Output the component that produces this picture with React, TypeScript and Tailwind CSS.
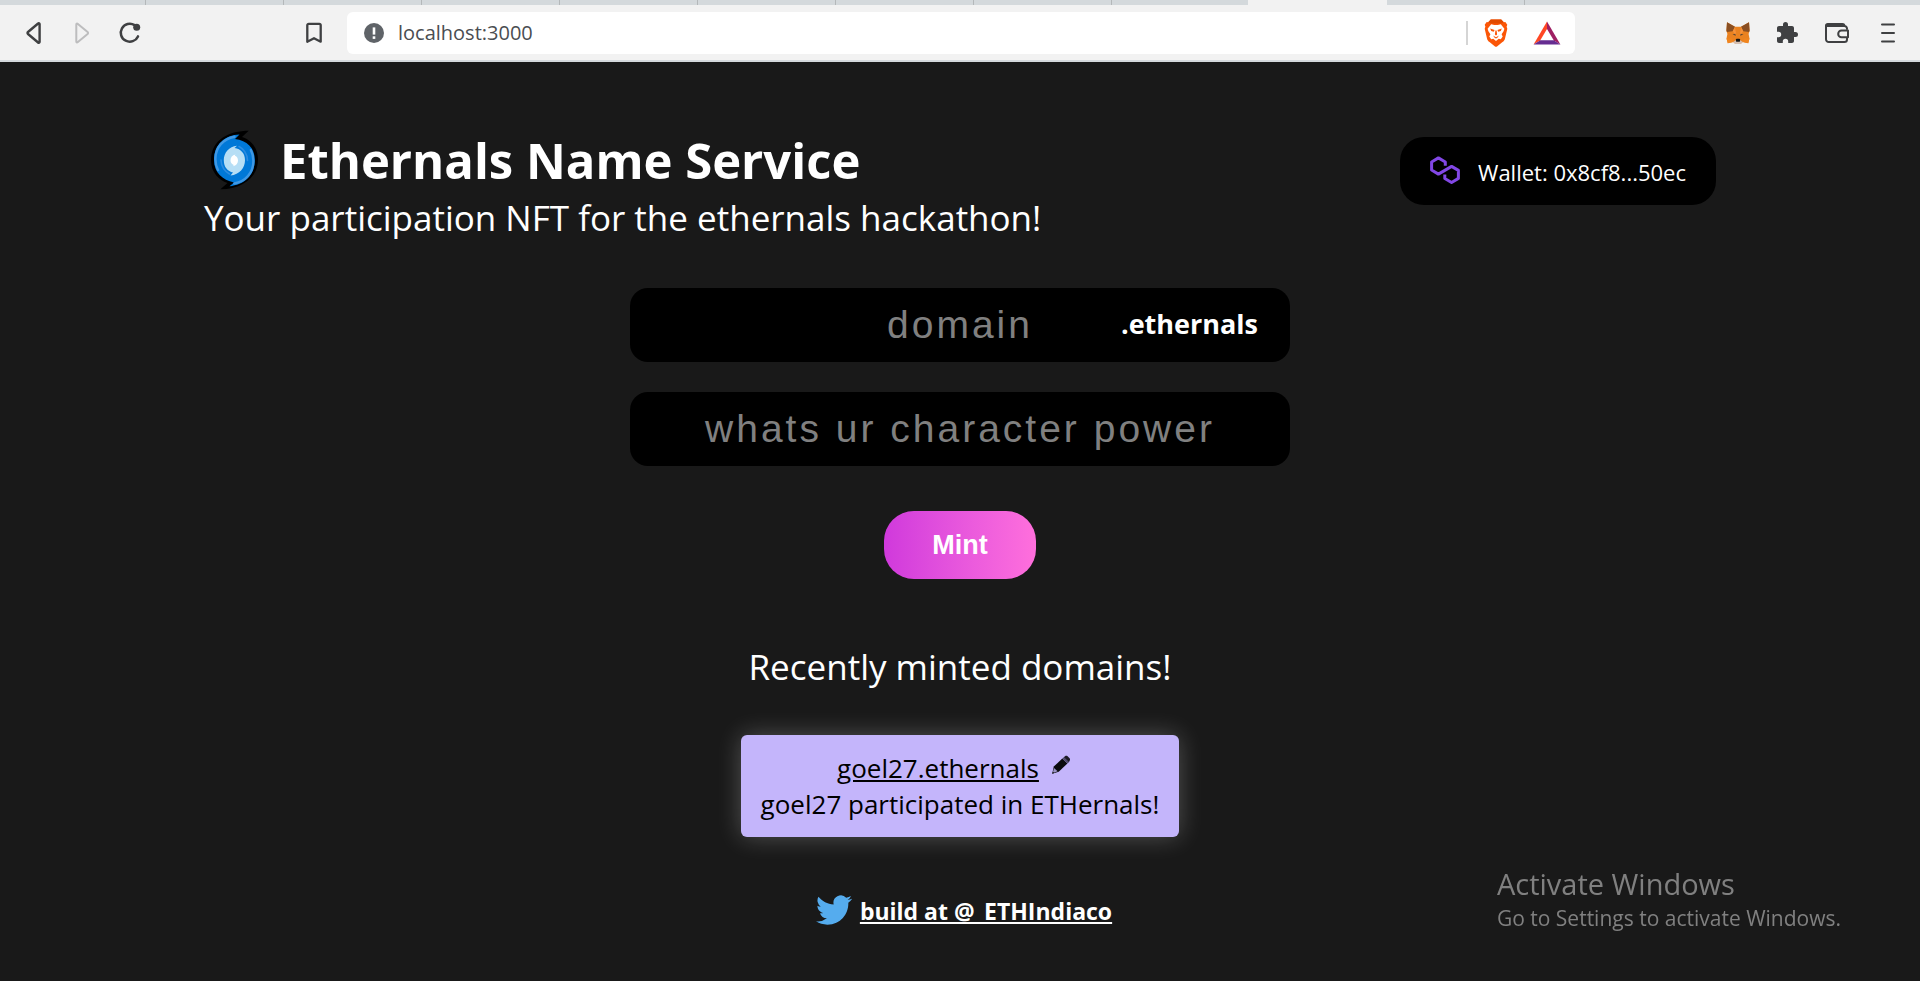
import React from "react";

const tabsBefore = [0, 1, 2, 3, 4, 5, 6, 7];

function BackIcon() {
  return (
    <svg width="20" height="24" viewBox="0 0 20 24" fill="none" stroke="#3f4042" strokeWidth="2.4" strokeLinejoin="round" aria-hidden="true">
      <path d="M15.6 3.2v17.6a.9.9 0 0 1-1.5.7L4 13a1.3 1.3 0 0 1 0-2l10.100-8.500a.9.9 0 0 1 1.500.7z" />
    </svg>
  );
}

function ForwardIcon() {
  return (
    <svg width="20" height="24" viewBox="0 0 20 24" fill="none" stroke="#bdbdbe" strokeWidth="2" strokeLinejoin="round" aria-hidden="true">
      <path d="M4.300 3.400v17.200a.8.8 0 0 0 1.300.7l10-8.300a1.300 1.300 0 0 0 0-2l-10-8.300a.8.8 0 0 0-1.300.7z" />
    </svg>
  );
}

function ReloadIcon() {
  return (
    <svg width="24" height="24" viewBox="0 0 24 24" fill="none" aria-hidden="true">
      <path d="M16.600 4.100A9 9 0 1 0 20 15.400" stroke="#3f4042" strokeWidth="2.500" strokeLinecap="round" />
      <circle cx="18.700" cy="6.200" r="3.500" fill="#3f4042" />
    </svg>
  );
}

function BookmarkIcon() {
  return (
    <svg width="18" height="24" viewBox="0 0 18 24" fill="none" stroke="#3f4042" strokeWidth="2.300" strokeLinejoin="round" aria-hidden="true">
      <path d="M3.700 2.900h10.600a1.400 1.400 0 0 1 1.400 1.400v16.400L9 17.200l-6.700 3.500V4.300a1.400 1.400 0 0 1 1.400-1.400z" />
    </svg>
  );
}

function InfoIcon() {
  return (
    <svg width="20" height="20" viewBox="0 0 20 20" aria-hidden="true">
      <circle cx="10" cy="10" r="10" fill="#5f6368" />
      <rect x="8.700" y="4.400" width="2.600" height="7.200" fill="#fff" />
      <rect x="8.700" y="13.300" width="2.600" height="2.600" fill="#fff" />
    </svg>
  );
}

function BraveIcon() {
  return (
    <svg width="24" height="28" viewBox="0 0 24 28" aria-hidden="true">
      <path d="M6.800.4h10.400l2.600 2.900 1.500-.2 2 2.600-.7 2.100.7 2-2.300 9.600c-.4 1.600-1.200 2.800-2.500 3.700L13 27.400c-.6.4-1.400.4-2 0l-5.500-4.300C4.200 22.200 3.400 21 3 19.400L.7 9.800l.7-2-.7-2.100 2-2.600 1.500.2z" fill="#fb5607" />
      <path d="M6.800.4h10.400l2.600 2.900-2.800 1.300H7L4.200 3.300z" fill="#e14a00" />
      <path d="M7.200 5.300 10.200 6h3.600l3-.7 3.600 4.400-.8 2.600-2 3 1.100 2.300-1.900 2.600-2.100-.5-2.700 2.400-2.700-2.400-2.100.5-1.900-2.600 1.100-2.300-2-3-.8-2.600z" fill="#fff" />
      <path d="M6.200 9.600 10.600 11l-.8 1.800-2.600-.8zM17.800 9.600 13.400 11l.8 1.800 2.600-.8zM9 16.600l3 1.700 3-1.700-2 2.600h-2zM11.400 11.500h1.200l.5 4L12 16.600l-1.100-1.100z" fill="#fb5607" />
    </svg>
  );
}

function BatIcon() {
  return (
    <svg width="28" height="24" viewBox="0 0 28 24" aria-hidden="true">
      <path d="M14 .4.600 23.400l6.700-4.100L14 8.100z" fill="#ff4724" />
      <path d="M14 .4v7.700l6.700 11.200 6.700 4.100z" fill="#9e1f63" />
      <path d="M.6 23.400h26.800l-6.700-4.100H7.300z" fill="#662d91" />
    </svg>
  );
}

function FoxIcon() {
  return (
    <svg width="24" height="22" viewBox="0 0 24 22" aria-hidden="true">
      <path d="M1 .3 9 4.800h6L23 .3l.6 8.500-1 3.300.9 4.300-1.300 4.900-5.400-1.400L14.600 22H9.400l-2.200-2.100-5.400 1.400-1.300-4.900.9-4.300-1-3.300z" fill="#ea8220" />
      <path d="M1 .3 9 4.800 6.600 9.300.9 9.900.4 8.500zM23 .3 15 4.800l2.400 4.500 5.700.6.500-1.400z" fill="#8a4f22" />
      <path d="m9 4.800 1.400 9.500L6.800 9.300zM15 4.800l-1.400 9.500 3.600-5z" fill="#f6923a" />
      <path d="M.5 16.400h5.900l.8 3.500-5.400 1.400zM23.500 16.400h-5.900l-.8 3.500 5.400 1.400z" fill="#f0851f" />
      <path d="m6.500 12.400 2.800-.6.6 1.900zM17.500 12.400l-2.800-.6-.6 1.900z" fill="#5a4634" />
      <path d="m7.200 19.900 2.500-1.700h4.600l2.500 1.700-2.200 2.100H9.400z" fill="#d5bfb2" />
      <path d="m9.800 17.600.8-.8h2.800l.8.8-.4 2.100h-3.600z" fill="#161616" />
    </svg>
  );
}

function PuzzleIcon() {
  return (
    <svg width="22" height="22" viewBox="1 1 22 22" fill="#3f4042" aria-hidden="true">
      <path d="M20.500 11H19V7c0-1.100-.9-2-2-2h-4V3.500a2.500 2.500 0 0 0-5 0V5H4c-1.100 0-2 .9-2 2v3.800h1.500a2.700 2.700 0 0 1 0 5.400H2V20c0 1.100.9 2 2 2h3.800v-1.500a2.700 2.700 0 0 1 5.400 0V22H17c1.100 0 2-.9 2-2v-4h1.500a2.500 2.500 0 0 0 0-5z" />
    </svg>
  );
}

function WalletIcon() {
  return (
    <svg width="26" height="22" viewBox="0 0 26 22" fill="none" stroke="#3f4042" strokeWidth="2" strokeLinejoin="round" aria-hidden="true">
      <path d="M23 7.800V6.600A2.600 2.600 0 0 0 20.400 4H2.600M23 15.500v2a2.600 2.600 0 0 1-2.600 2.600H4.800A2.800 2.800 0 0 1 2 17.300V3.600A1.600 1.600 0 0 1 3.600 2h14.800a2 2 0 0 1 2 2" />
      <path d="M24 8.600h-6.500a3.300 3.300 0 0 0 0 6.600H24z" />
    </svg>
  );
}

function MenuIcon() {
  return (
    <svg width="16" height="20" viewBox="0 0 16 20" stroke="#3f4042" strokeWidth="2" strokeLinecap="round" aria-hidden="true">
      <path d="M2 1.500h12M2 10h12M2 18.500h12" />
    </svg>
  );
}

function CycloneIcon() {
  return (
    <svg width="48" height="60" viewBox="0 0 48 60" aria-hidden="true">
      <path d="M38.700.8C20 .8 1 9 1 30.500c0 12 8 19.500 16.500 22.500L10.400 59.300C30 59.500 48 49 48 29.500 48 17.500 40.500 9.500 32 7z" fill="#000" />
      <path d="M29.500 4.500C15 5 4 14.500 4 30c0 12.500 8.500 20 20 22.500l-4.500 3.700C34 55 44.800 45.500 44.800 30c0-12.500-8-19.500-19.800-21z" fill="#0078d7" />
      <path d="M24.500 6.800C13.500 8.800 5.400 17 5.400 29c0 4 1 8 2.600 11" fill="none" stroke="#3f98e4" strokeWidth="2.400" strokeLinecap="round" />
      <path d="M24.300 53.500C35.300 51.500 43.400 43 43.400 31c0-4-1-8-2.600-11" fill="none" stroke="#3f98e4" strokeWidth="2.400" strokeLinecap="round" />
      <path d="M29 16.500c4 2 8.500 7 8.500 14M19.500 44c-4-2-8.500-7-8.500-14" fill="none" stroke="#2c8ce0" strokeWidth="1.600" strokeLinecap="round" />
      <path d="M27 15.800c-8 1-13.200 6.900-13.200 14.400 0 7 4 11 9.200 12.300l-2.500 3C29.500 44.500 35 38 35 30.200c0-6.800-4-11.200-10.500-12.200z" fill="#b6def5" />
      <path d="M25.500 24.600c-3.200.7-5 3-5 5.700 0 2.500 1.400 4 3.300 4.600l-.8 1.300c3.200-.6 5-3 5-5.800 0-2.500-1.400-4-3.200-4.600z" fill="#fff" />
    </svg>
  );
}

function PolygonIcon() {
  return (
    <svg width="30" height="30" viewBox="0 0 30 30" fill="none" stroke="#8247e5" strokeWidth="3" strokeLinejoin="round" aria-hidden="true">
      <path d="M15.300 9.800V6L8.400 1.900 1.600 6v8l6.800 4.100 13.200-7.700 6.800 4v8l-6.800 4.100-6.800-4v-3.900" />
    </svg>
  );
}

function PencilIcon() {
  return (
    <svg width="20" height="20" viewBox="0 0 20 20" aria-hidden="true">
      <path d="M2.800 11.600 11.300 3.600l5.100 5L7.700 16.800l-6.500 2z" fill="#0b0b0d" />
      <path d="m11.300 3.600 1.500-1.300 5.100 4.900-1.500 1.400z" fill="#4d4768" />
      <path d="M12.800 2.300 14 1.300c.8-.6 1.900-.6 2.600 0l2 1.900c.6.7.6 1.800 0 2.500l-.7 1.500z" fill="#1d1b26" />
      <path d="m3 12.900 3.700 3.400-3.900 1.400-.8-.8z" fill="#9a92c4" />
      <path d="m1.900 16.900 1.200 1.100-1.900.8z" fill="#111" />
    </svg>
  );
}

function TwitterIcon() {
  return (
    <svg width="36" height="30" viewBox="0 2 24 20" fill="#55acee" aria-hidden="true">
      <path d="M23.950 4.570a10 10 0 0 1-2.820.77 4.960 4.960 0 0 0 2.160-2.720c-.95.550-2.010.960-3.130 1.180a4.920 4.920 0 0 0-8.380 4.480C7.690 8.100 4.070 6.130 1.640 3.160a4.920 4.920 0 0 0 1.520 6.570 4.900 4.900 0 0 1-2.230-.61v.06c0 2.380 1.690 4.370 3.950 4.830a5 5 0 0 1-2.210.08 4.940 4.940 0 0 0 4.600 3.420A9.870 9.870 0 0 1 0 19.540a13.990 13.990 0 0 0 7.550 2.210c9.050 0 14-7.500 14-13.980 0-.21 0-.42-.02-.63a9.940 9.940 0 0 0 2.460-2.550z" />
    </svg>
  );
}

function BrowserBar() {
  return (
    <div className="border-b-2 border-[#d5dadd] bg-[#f2f2f2]">
      <div className="flex h-[5px]" aria-hidden="true">
        <div className="w-2 shrink-0 bg-[#d4d9dc]" />
        {tabsBefore.map((tab) => (
          <div key={tab} className="w-[138px] shrink-0 border-r border-[#b4b8ba] bg-[#d4d9dc]" />
        ))}
        <div className="w-[136px] shrink-0 bg-[#d4d9dc]" />
        <div className="w-[139px] shrink-0" />
        <div className="w-[138px] shrink-0 border-r border-[#b4b8ba] bg-[#d4d9dc]" />
        <div className="flex-1 bg-[#d4d9dc]" />
      </div>
      <div className="flex h-[55px] items-center px-6">
        <button type="button" aria-label="Back"><BackIcon /></button>
        <button type="button" aria-label="Forward" className="ml-7"><ForwardIcon /></button>
        <button type="button" aria-label="Reload" className="ml-[26px]"><ReloadIcon /></button>
        <button type="button" aria-label="Bookmark" className="ml-[163px]"><BookmarkIcon /></button>
        <div className="ml-6 flex h-[42px] flex-1 items-center rounded-md bg-white pr-3.5 pl-[17px]">
          <InfoIcon />
          <input
            aria-label="Address"
            defaultValue="localhost:3000"
            className="ml-3.5 min-w-0 flex-1 bg-transparent text-[20px] text-[#4a4d51] outline-none"
          />
          <span className="h-6 w-0.5 bg-[#d5d5d5]" />
          <button type="button" aria-label="Shields" className="ml-4"><BraveIcon /></button>
          <button type="button" aria-label="Rewards" className="ml-[25px]"><BatIcon /></button>
        </div>
        <div className="ml-[151px] flex items-center gap-[26px]">
          <button type="button" aria-label="MetaMask"><FoxIcon /></button>
          <button type="button" aria-label="Extensions"><PuzzleIcon /></button>
          <button type="button" aria-label="Wallet"><WalletIcon /></button>
          <button type="button" aria-label="Menu" className="ml-1"><MenuIcon /></button>
        </div>
      </div>
    </div>
  );
}

const fieldClass =
  "h-[74px] w-full rounded-[18px] bg-black text-center font-['Liberation_Sans',Arial,sans-serif] text-[39px] tracking-[3px] text-white outline-none placeholder:text-[#808080]";

export default function App() {
  return (
    <div className="flex min-h-screen flex-col bg-[#191919] font-['Open_Sans','Noto_Sans',sans-serif] text-white">
      <BrowserBar />
      <main className="flex flex-1 flex-col items-center px-8">
        <header className="flex w-full max-w-[1512px] items-start justify-between pt-[66px]">
          <div>
            <h1 className="flex items-center gap-[22px] pl-1.5 text-[49px] leading-[64px] font-bold">
              <CycloneIcon />
              Ethernals Name Service
            </h1>
            <p className="text-[35px] leading-[52px]">Your participation NFT for the ethernals hackathon!</p>
          </div>
          <div className="mt-[9px] flex h-[68px] min-w-[316px] items-center justify-between gap-4 rounded-3xl bg-black px-[30px] text-[22px]">
            <PolygonIcon />
            <span className="pt-0.5">Wallet: 0x8cf8...50ec</span>
          </div>
        </header>

        <form className="mt-11 flex w-full max-w-[660px] flex-col items-center" onSubmit={(e) => e.preventDefault()}>
          <div className="relative w-full">
            <input aria-label="domain" placeholder="domain" className={fieldClass} />
            <span className="absolute inset-y-0 right-8 flex items-center pb-0.5 text-[27px] font-bold">.ethernals</span>
          </div>
          <input aria-label="whats ur character power" placeholder="whats ur character power" className={`${fieldClass} mt-[30px]`} />
          <button
            type="submit"
            className="mt-[45px] h-[68px] w-[152px] rounded-[30px] bg-linear-to-r from-[#d039dc] to-[#ff6fdc] font-['Liberation_Sans',Arial,sans-serif] text-[27px] font-bold"
          >
            Mint
          </button>
        </form>

        <h2 className="mt-[62px] text-[35px] leading-[52px]">Recently minted domains!</h2>

        <div className="mt-[42px] rounded-md bg-[#c4b5fb] px-5 py-[15px] text-center text-[26px] leading-9 text-black shadow-[0_0_24px_rgba(255,255,255,0.25)]">
          <div className="flex items-center justify-center gap-3 pr-3">
            <a href="#goel27" className="underline">goel27.ethernals</a>
            <button type="button" aria-label="Edit record" className="mb-1.5"><PencilIcon /></button>
          </div>
          <p>goel27 participated in ETHernals!</p>
        </div>

        <footer className="mt-[54px] flex items-center gap-2 pb-8 pl-2">
          <TwitterIcon />
          <a href="#ethindia" className="pt-0.5 text-[23px] leading-9 font-bold underline">build at @_ETHIndiaco</a>
        </footer>
      </main>

      <div className="pointer-events-none fixed right-[79px] bottom-[49px] text-[#808080]">
        <div className="text-[29px] leading-10">Activate Windows</div>
        <div className="text-[21px] leading-7">Go to Settings to activate Windows.</div>
      </div>
    </div>
  );
}
